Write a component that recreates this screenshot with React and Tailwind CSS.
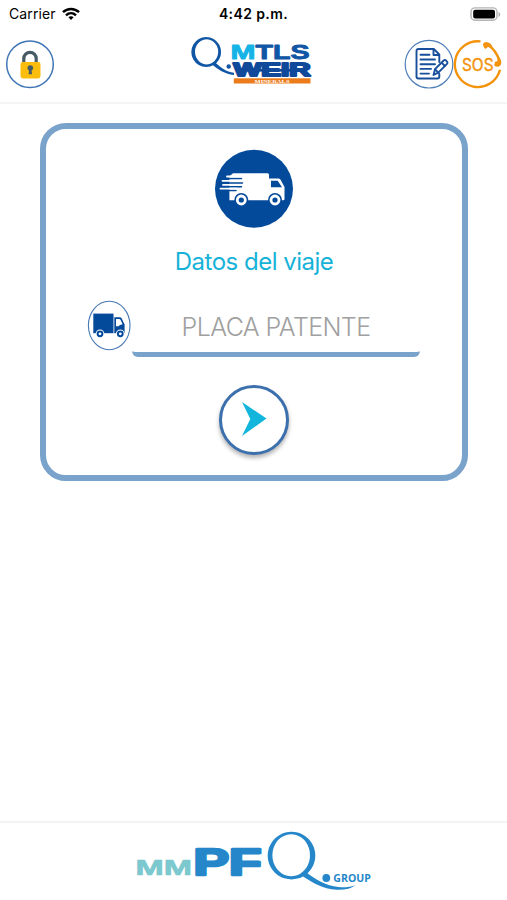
import React, { useState } from 'react';

const StatusBar = () => (
  <div className="h-7 px-[9px] grid grid-cols-3 items-center text-black">
    <div className="flex items-center gap-[6px]">
      <span className="text-[14px] leading-none tracking-[0.1px]">Carrier</span>
      <svg width="18" height="14" viewBox="0 0 18 14" fill="none" stroke="black" strokeWidth="2.5">
        <path d="M1 5.2C5.5 0.9 12.5 0.9 17 5.2" />
        <path d="M4 8.3c2.9-2.7 7.1-2.7 10 0" />
        <path d="M6.4 10.3c1.5-1.4 3.7-1.4 5.2 0L9 13z" fill="black" stroke="none" />
      </svg>
    </div>
    <span className="text-center text-[14px] leading-none font-semibold tracking-[0.4px] whitespace-nowrap">4:42 p.m.</span>
    <svg className="justify-self-end -mr-[3px]" width="31" height="15" viewBox="0 0 31 15">
      <rect x="1" y="0.9" width="26" height="12.4" rx="4" fill="white" stroke="#b4b4b4" strokeWidth="1.4" />
      <rect x="3.2" y="2.8" width="21.8" height="8.6" rx="2" fill="black" />
      <path d="M28.5 5c2.4 1 2.4 4 0 5z" fill="#b4b4b4" />
    </svg>
  </div>
);

const BrandLogo = () => (
  <svg className="mt-[8px] -ml-[4px]" width="124" height="50" viewBox="190 36 124 50">
    {/* ring and swoosh */}
    <path fillRule="evenodd" fill="#1056a5" d="M206.2 37a14.9 15 0 1 0 0.01 0zM206.6 39.2a11.6 12.6 0 1 1-0.01 0z" />
    <path d="M212 64.5c5 4 12 9.5 22 10.5v-2.200c-8-1-13-5.300-18.500-10z" fill="#1056a5" />
    <circle cx="228.7" cy="66.5" r="2.200" fill="#1056a5" />
    <g fontFamily="Liberation Sans, sans-serif" fontWeight="700" strokeLinejoin="round">
      <text x="230.500" y="59" fontSize="21" textLength="25" lengthAdjust="spacingAndGlyphs" fill="#15b4e6" stroke="#15b4e6" strokeWidth="0.900">M</text>
      <text x="255.500" y="59" fontSize="21" textLength="54" lengthAdjust="spacingAndGlyphs" fill="#1056a5" stroke="#1056a5" strokeWidth="0.900">TLS</text>
      <text x="233.500" y="75.800" fontSize="17.500" textLength="77" lengthAdjust="spacingAndGlyphs" fill="#10489a" stroke="#10489a" strokeWidth="1.900">WEIR</text>
    </g>
    <rect x="245" y="69" width="60" height="2.600" fill="#10489a" />
    <rect x="233.800" y="78.300" width="76.700" height="5.200" fill="#ec7b1c" />
    <text x="254.500" y="82.700" fontFamily="Liberation Serif, serif" fontWeight="700" fontSize="5" textLength="35" lengthAdjust="spacingAndGlyphs" fill="white">MINERALS</text>
  </svg>
);

const LockIcon = () => (
  <svg width="50" height="50" viewBox="0 0 50 50">
    <circle cx="25" cy="25.300" r="23.300" fill="white" stroke="#3f74b5" strokeWidth="1.500" />
    <path d="M18.800 25v-5.500a6.200 6.200 0 0 1 12.400 0V25" fill="none" stroke="#455a64" strokeWidth="3.200" />
    <rect x="15.500" y="23" width="20" height="16.500" rx="2.400" fill="#fbbd0d" />
    <circle cx="25.300" cy="29" r="2.800" fill="#455a64" />
    <path d="M24.300 29.500h2l.7 5.800h-3.400z" fill="#455a64" />
  </svg>
);

const FormIcon = () => (
  <svg width="50" height="50" viewBox="0 0 50 50">
    <circle cx="25" cy="25.200" r="23.800" fill="white" stroke="#4f7fb9" strokeWidth="1.200" />
    <g fill="none" stroke="#174f9c" strokeWidth="1.900" strokeLinejoin="round" strokeLinecap="round">
      <path d="M35.300 23v-7.500l-5.500-5.500H14.500q-2 0-2 2v25.500q0 2 2 2h19q1.800 0 1.800-2V35" />
      <path d="M29.500 10.500v5.500h5.500" />
      <path d="M16.500 15.800h9M16.500 20.500h14.500M16.500 25.200h14.500M16.500 29.900h10.500M16.500 34.600h8.500" />
      <path d="M29.500 36l1.500-5.800 8.700-8.700q1.200-1 2.400.2l.9.900q1.100 1.200 0 2.300l-8.700 8.700z" fill="white" />
      <path d="M37.600 23.700l3.300 3.300M31.200 30.500l3.300 3.300" />
    </g>
  </svg>
);

const SosIcon = () => (
  <svg width="50" height="50" viewBox="0 0 50 50">
    <g fill="none" stroke="#f3920b">
      <path d="M27.500 2.400A22.900 22.900 0 1 0 47 30.700" strokeWidth="2.400" />
      <path d="M35 6c5.500 3.500 9.500 9 11.200 16" strokeWidth="2.500" />
    </g>
    {/* handset ends */}
    <path d="M29.800 5.200q2-3.200 5.600-1.700 2.800 1 4 4l-1.800 1.300-2.300-1-3 2.200q-2-2-2.500-4.800z" fill="#f3920b" />
    <path d="M46 18q2.600 2.500 2.300 6.300-.3 2.800-2.300 3.300-2.800.4-4.800-1.200l.8-3.600 2.200-.6z" fill="#f3920b" />
    <text x="9" y="32" fontFamily="Inter, sans-serif" fontSize="17.500" textLength="31.500" lengthAdjust="spacingAndGlyphs" fill="#f3920b" stroke="#f3920b" strokeWidth="0.400">SOS</text>
  </svg>
);

const FastTruck = () => (
  <svg width="80" height="80" viewBox="214 148.500 80 80">
    <circle cx="254" cy="188.300" r="39" fill="#034a9b" />
    <path d="M233 172.700h34.500q1.500 0 1.500 1.500v25.600h-39.600v-24z" fill="white" />
    <path d="M269 178h9.200q1.500 0 2.400 1.300l3.900 7.200v12q0 1.300-1.300 1.300H269z" fill="white" />
    <path d="M271 180.300h6.700l4.300 6.500h-11z" fill="#034a9b" />
    {/* speed lines cut into the cargo box */}
    <g strokeLinecap="round">
      <path d="M229 178.100h12.500M229 182.500h13.500M229 186.300h12.500M229 190.100h7" stroke="#034a9b" strokeWidth="1.500" />
      <path d="M227 176h14M222.500 180.300h19M223 184.400h19M220.500 188.200h16" stroke="white" strokeWidth="1.800" />
    </g>
    {[241.3, 275].map((cx) => (
      <g key={cx}>
        <circle cx={cx} cy="199.500" r="7" fill="#034a9b" />
        <circle cx={cx} cy="199.500" r="4" fill="none" stroke="white" strokeWidth="2.800" />
      </g>
    ))}
  </svg>
);

const TruckBadge = () => (
  <svg width="44" height="51" viewBox="87 300 44 51">
    <ellipse cx="109.200" cy="325.500" rx="20.800" ry="24.300" fill="white" stroke="#4779b4" strokeWidth="1.100" />
    <rect x="93.300" y="313.600" width="20.200" height="19.600" fill="#034a9b" />
    <path d="M114.300 317.300h5.400q1.400 0 2 1.200l2.900 6v8.700h-10.300z" fill="#034a9b" />
    <path d="M116 319h3.200q1 0 1.400.9l2 4.300-2.600.8-1.500 1.300H116z" fill="white" />
    {[100, 120.3].map((cx) => (
      <g key={cx}>
        <circle cx={cx} cy="333.800" r="4.400" fill="white" />
        <circle cx={cx} cy="333.800" r="2.400" fill="white" stroke="#034a9b" strokeWidth="2" />
      </g>
    ))}
  </svg>
);

const GroupLogo = () => (
  <svg width="240" height="64" viewBox="134 829 240 64">
    <g fontFamily="Liberation Sans, sans-serif" strokeLinejoin="round">
      <text x="135.500" y="875" fontSize="21.500" fontWeight="700" textLength="56.500" lengthAdjust="spacingAndGlyphs" fill="#7cc8cf" stroke="#7cc8cf" strokeWidth="0.700">MM</text>
      <text x="193.500" y="874.500" fontSize="37" fontWeight="700" textLength="68" lengthAdjust="spacingAndGlyphs" fill="#2586ca" stroke="#2586ca" strokeWidth="2.600">PF</text>
      <text x="333.300" y="881.800" fontFamily="Open Sans, sans-serif" fontSize="10.500" fontWeight="700" textLength="37.500" lengthAdjust="spacing" fill="#2586ca">GROUP</text>
    </g>
    <path fillRule="evenodd" fill="#2586ca" d="M291.500 831.800a23.800 23.800 0 1 0 .01 0zM291.200 834.200a18.800 21 0 1 1-.01 0z" />
    <path d="M301 875c12 8 21 14 36 14.800 8 .3 14-1.300 18.500-4.600-6 1.900-11 2.400-17 1.800-13-1.200-22-7-32-14.500z" fill="#2586ca" />
    <circle cx="326.300" cy="878" r="3.900" fill="#2586ca" />
  </svg>
);

const App = () => {
  const [plate, setPlate] = useState('');

  return (
    <div className="h-screen flex flex-col bg-white font-['Inter',sans-serif] overflow-hidden">
      <StatusBar />

      {/* Header */}
      <header className="h-[76px] shrink-0 flex justify-between items-start pl-[5px] pr-[4px] border-b-2 border-[#f5f5f5]">
        <button className="mt-[11px] w-[98px]"><LockIcon /></button>
        <BrandLogo />
        <div className="flex mt-[11px]">
          <button><FormIcon /></button>
          <button className="-ml-px"><SosIcon /></button>
        </div>
      </header>

      {/* Trip form */}
      <main className="flex-1 pt-[19px] pl-[40px] pr-[39px]">
        <section className="h-[358px] border-[6px] border-[#7aa3cc] rounded-[26px] flex flex-col items-center pt-[20px]">
          <FastTruck />
          <h1 className="mt-[17px] text-[24px] leading-[32px] text-[#16b2d8] tracking-[-0.5px]">Datos del viaje</h1>
          <div className="mt-[22px] w-[334px] flex items-start">
            <TruckBadge />
            <input
              value={plate}
              onChange={(e) => setPlate(e.target.value)}
              placeholder="PLACA PATENTE"
              className="ml-px w-[288px] h-[57px] pt-[2px] text-center text-[25px] tracking-[-0.6px] font-light border-b-[5px] border-[#7aa3cc] rounded-[6px] outline-none placeholder:text-[#a0a0a0]"
            />
          </div>
          <button className="mt-[28px] size-[70px] rounded-full border-[3px] border-[#3b70ad] bg-white shadow-[0_3px_4px_rgba(0,0,0,0.3)] flex items-center justify-center">
            <svg width="26" height="36" viewBox="0 0 26 36">
              <path d="M1 0l24.500 16.500L1 34l8.300-17z" fill="#12b5dc" />
            </svg>
          </button>
        </section>
      </main>

      <footer className="h-[79px] shrink-0 border-t-2 border-[#f3f3f3] flex justify-center pt-[6px]">
        <GroupLogo />
      </footer>
    </div>
  );
};

export default App;
